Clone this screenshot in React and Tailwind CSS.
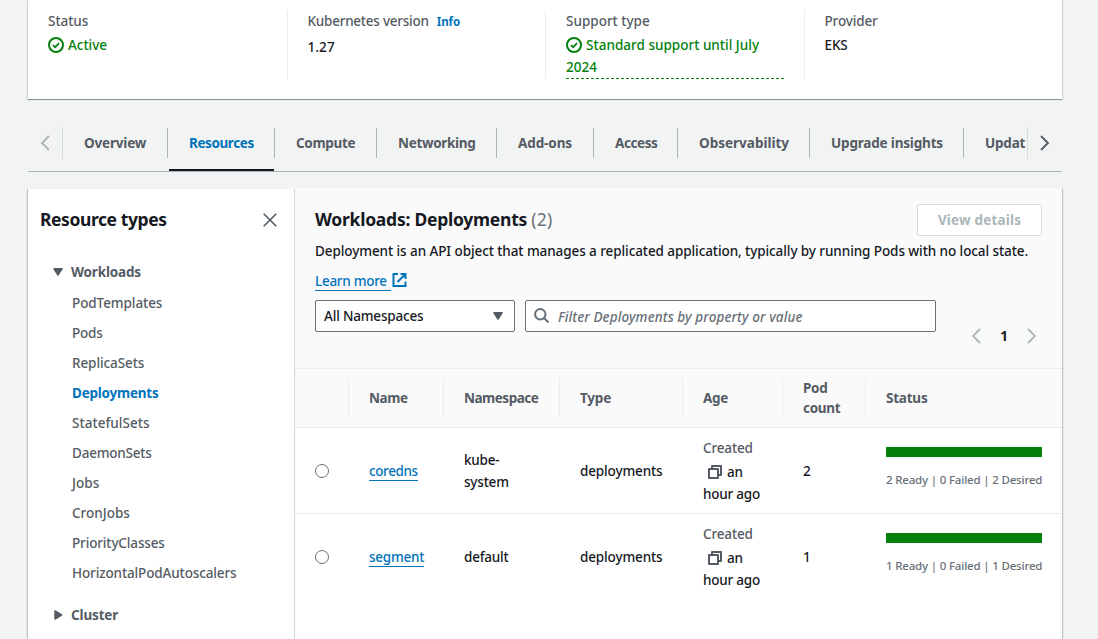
import React from "react";

const CheckCircle = () => (
  <svg className="mr-[0.6px] inline-block size-4 align-[-3px]" viewBox="0 0 16 16" fill="none" stroke="currentColor" strokeWidth="2">
    <circle cx="8" cy="8" r="7" />
    <path d="m4.8 8 2.3 2.2 4-4" strokeWidth="1.7" />
  </svg>
);

const Chevron = ({ left, className = "" }) => (
  <svg className={`h-4 w-4 shrink-0 ${className}`} viewBox="0 0 16 16" fill="none" stroke="currentColor" strokeWidth="1.8">
    <path d={left ? "M12 1 5 8l7 7" : "m4 1 7 7-7 7"} />
  </svg>
);

const Caret = ({ right, className = "" }) => (
  <svg className={`shrink-0 ${className}`} width="16" height="16" viewBox="0 0 16 16" fill="currentColor" stroke="currentColor" strokeLinejoin="round">
    <path d={right ? "M5 4v8l6.5-4z" : "M4 4.8h8l-4 6.2z"} strokeWidth="1.5" />
  </svg>
);

const CopyIcon = () => (
  <svg className="mr-[5px] ml-[5px] inline-block h-[14px] w-[14px] align-[-2px] text-[#545b64]" viewBox="0 0 14 14" fill="none" stroke="currentColor" strokeWidth="2" strokeLinejoin="round">
    <path d="M1 4h9v9H1z" />
    <path d="M4 4V1h9v9h-3" />
  </svg>
);

const tabs = [
  ["Overview", "w-[105px] pl-[21px] tracking-[-0.18px]"],
  ["Resources", "w-[107px] pl-[21px] tracking-[-0.41px] text-[#0073bb]"],
  ["Compute", "w-[102px] pl-[21px] tracking-[-0.33px]"],
  ["Networking", "w-[120px] pl-[21px] tracking-[-0.31px]"],
  ["Add-ons", "w-[97px] pl-[21px] tracking-[-0.1px]"],
  ["Access", "w-[84px] pl-[21px] tracking-[-0.4px]"],
  ["Observability", "w-[132px] pl-[21px] tracking-[0px]"],
  ["Upgrade insights", "w-[154px] pl-[21px] tracking-[-0.18px]"],
  ["Updat", "w-[63px] pl-[21px] tracking-[-0.2px]"],
];

const types = [
  ["PodTemplates", "tracking-[-0.08px]"],
  ["Pods", "tracking-[-0.2px]"],
  ["ReplicaSets", "tracking-[-0.08px]"],
  ["Deployments", "tracking-[-0.23px] font-bold text-[#0073bb]"],
  ["StatefulSets", "tracking-[0.04px]"],
  ["DaemonSets", "tracking-[-0.22px]"],
  ["Jobs", "tracking-[0.1px]"],
  ["CronJobs", "tracking-[0px]"],
  ["PriorityClasses", "tracking-[-0.14px]"],
  ["HorizontalPodAutoscalers", "tracking-[-0.13px]"],
];

const columns = "grid grid-cols-[53px_95px_116px_123px_100px_83px_197px]";

const headers = [
  ["Name", "tracking-[-0.4px]"],
  ["Namespace", "tracking-[-0.48px]"],
  ["Type", "tracking-[-0.2px]"],
  ["Age", "tracking-[-0.35px]"],
  ["Pod count", "tracking-[-0.28px]"],
  ["Status", "tracking-[-0.22px]"],
];

const rows = [
  { name: "coredns", nameCls: "tracking-[-0.38px]", ns: "kube-system", count: 2, border: "shadow-[inset_0_-1px_0_0_#eaeded]" },
  { name: "segment", nameCls: "tracking-[-0.25px]", ns: "default", count: 1, border: "" },
];

function Overview() {
  return (
    <section className="grid h-[99px] shrink-0 grid-cols-4 bg-white pt-[10px] shadow-[0_1px_0_0_#879596,1px_1px_1px_0_rgba(0,28,36,0.15),-1px_1px_1px_0_rgba(0,28,36,0.15)]">
      <div className="h-[69px] pl-5">
        <div className="leading-[22px] tracking-[-0.05px] text-[#545b64]">Status</div>
        <div className="mt-[2px] leading-[22px] tracking-[-0.05px] text-[#037f0c]"><CheckCircle /> Active</div>
      </div>
      <div className="h-[69px] border-l border-[#eaeded] pl-5">
        <div className="leading-[22px] tracking-[-0.24px] text-[#545b64]">
          Kubernetes version<span className="ml-2 text-[11.5px] font-bold tracking-[-0.05px] text-[#0073bb]">Info</span>
        </div>
        <div className="mt-[3px] leading-[22px] tracking-[0.1px]">1.27</div>
      </div>
      <div className="h-[69px] border-l border-[#eaeded] pr-5 pl-5">
        <div className="leading-[22px] tracking-[0px] text-[#545b64]">Support type</div>
        <div className="mt-[2px] border-b border-dashed border-[#037f0c] leading-[22px] tracking-[0.01px] text-[#037f0c]">
          <CheckCircle /> Standard support until July<br />2024
        </div>
      </div>
      <div className="h-[69px] border-l border-[#eaeded] pl-5">
        <div className="leading-[22px] tracking-[-0.15px] text-[#545b64]">Provider</div>
        <div className="mt-[2px] leading-[22px] tracking-[-0.1px]">EKS</div>
      </div>
    </section>
  );
}

function Tabs() {
  return (
    <nav className="mt-[17px] flex h-[56px] shrink-0 border-b border-[#aab7b8] pt-[11px] text-[#545b64]">
      <div className="flex h-8 w-[35px] items-center border-r border-[#d5dbdb] pl-[9px]">
        <Chevron left className="text-[#aab7b8]" />
      </div>
      <div className="flex h-[44px] w-[964px]">
        {tabs.map(([label, cls], i) => (
          <div key={label} className={`relative flex h-[44px] shrink-0 flex-col pt-px font-bold ${cls}`}>
            <span className="leading-[30px]">{label}</span>
            {i < 8 && <span className="absolute top-px right-0 h-[30px] w-px bg-[#aab7b8]" />}
            {i === 1 && <span className="absolute bottom-0 left-px h-[2px] w-[105px] bg-[#16191f]" />}
          </div>
        ))}
      </div>
      <div className="flex h-8 w-[35px] items-center border-l border-[#d5dbdb] bg-[#f2f3f3] pl-[9px]">
        <Chevron className="text-[#545b64]" />
      </div>
    </nav>
  );
}

function Sidebar() {
  return (
    <aside className="mt-px w-[267px] shrink-0 border-r border-[#d0d7d7] bg-white text-[#545b64]">
      <div className="flex h-[60px] items-center justify-between pr-4 pl-3">
        <h2 className="text-[17.5px] font-bold tracking-[-0.42px] text-[#16191f]">Resource types</h2>
        <svg className="mt-[2px] size-4" viewBox="0 0 16 16" fill="none" stroke="currentColor" strokeWidth="1.6">
          <path d="m1.7 1.7 12.6 12.6M14.3 1.7 1.7 14.3" />
        </svg>
      </div>
      <div className="mt-[12px] flex h-[22px] items-center pl-[22px] font-bold tracking-[-0.18px]">
        <Caret className="mr-[5px]" />Workloads
      </div>
      <ul className="pt-1 pl-[44px]">
        {types.map(([label, cls]) => (
          <li key={label} className={`h-[30px] leading-[32px] ${cls}`}>{label}</li>
        ))}
      </ul>
      <div className="mt-[17px] flex h-[22px] items-center pl-[22px] font-bold tracking-[-0.15px]">
        <Caret right className="mr-[5px]" />Cluster
      </div>
    </aside>
  );
}

function Header() {
  return (
    <div className="h-[180px] bg-[#fafafa] px-5 pt-4">
      <div className="flex h-8 items-center justify-between">
        <h2 className="pb-[2px] text-[17.5px] font-bold tracking-[-0.25px]">
          Workloads: Deployments <span className="font-normal tracking-[0.2px] text-[#687078]">(2)</span>
        </h2>
        <button className="h-8 w-[125px] rounded-[2px] border border-[#d5dbdb] bg-white font-bold tracking-[0.18px] text-[#aab7b8]">View details</button>
      </div>
      <p className="mt-[4px] leading-[22px] tracking-[-0.081px] whitespace-nowrap">
        Deployment is an API object that manages a replicated application, typically by running Pods with no local state.
      </p>
      <div className="mt-[8px] flex h-[21px] items-start">
        <a className="h-[21px] border-b border-[#0073bb] pr-[4px] leading-[22px] tracking-[-0.28px] text-[#0073bb]">Learn more</a>
        <svg className="mt-[2px] ml-px h-[15px] w-[15px] text-[#0073bb]" viewBox="0 0 15 15" fill="none" stroke="currentColor" strokeWidth="2">
          <path d="M6 2H1.5v12h12V9.5M8.5 2h5v5M13.5 2 5.5 10" />
        </svg>
      </div>
      <div className="mt-[9px] flex">
        <div className="flex h-8 w-[200px] items-center justify-between rounded-[2px] border border-[#687078] bg-white pr-2 pl-2 tracking-[-0.18px]">
          All Namespaces<Caret className="text-[#545b64]" />
        </div>
        <div className="ml-[10px] flex h-8 w-[411px] items-center rounded-[2px] border border-[#687078] bg-white pl-2 text-[#687078]">
          <svg className="mr-2 size-4" viewBox="0 0 16 16" fill="none" stroke="currentColor" strokeWidth="2">
            <circle cx="6.3" cy="6.3" r="5.2" />
            <path d="m10 10 4.5 4.5" />
          </svg>
          <span className="pt-[3px] tracking-[0.11px] italic">Filter Deployments by property or value</span>
        </div>
        <div className="mt-[28px] ml-[32px] flex h-4 items-center text-[#aab7b8]">
          <Chevron left />
          <span className="w-[40px] text-center font-bold text-[#16191f]">1</span>
          <Chevron />
        </div>
      </div>
    </div>
  );
}

function Table() {
  return (
    <div>
      <div className={`${columns} h-[60px] border-t border-b border-[#eaeded] bg-[#fafafa] py-[9px] text-[#545b64]`}>
        <div />
        {headers.map(([label, cls]) => (
          <div key={label} className={`flex items-center border-l border-[#eaeded] pr-5 pl-5 leading-5 font-bold ${cls}`}>{label}</div>
        ))}
      </div>
      {rows.map((r) => (
        <div key={r.name} className={`${columns} h-[86px] items-center bg-white ${r.border}`}>
          <div className="pl-5"><div className="size-[14px] rounded-full border border-[#687078]" /></div>
          <div className="pl-[21px]"><a className={`inline-block h-[20px] border-b border-[#0073bb] leading-[20px] text-[#0073bb] ${r.nameCls}`}>{r.name}</a></div>
          <div className="pr-10 pl-[21px] leading-[22px] tracking-[-0.2px]">{r.ns}</div>
          <div className="pl-[21px] leading-[22px] tracking-[-0.14px]">deployments</div>
          <div className="pl-[21px] leading-[22px] tracking-[-0.22px]">
            <div className="mb-[2px] tracking-[-0.15px] text-[#545b64]">Created</div>
            <CopyIcon />an<br />hour ago
          </div>
          <div className="pl-[21px]">{r.count}</div>
          <div className="h-[46px] pt-[2px] pl-[21px]">
            <div className="-mt-[3px] h-[10px] w-[156px] bg-[#037f0c]" />
            <div className="mt-[13px] text-[11.5px] leading-5 tracking-[-0.18px] whitespace-nowrap text-[#687078]">
              {r.count} Ready | 0 Failed | {r.count} Desired
            </div>
          </div>
        </div>
      ))}
    </div>
  );
}

export default function App() {
  return (
    <div className="flex h-[639px] w-[1098px] flex-col overflow-hidden bg-[#f2f3f3] pr-9 pl-7 font-['Noto_Sans','Open_Sans',sans-serif] text-[13.5px] font-medium text-[#16191f]">
      <Overview />
      <Tabs />
      <div className="mt-[16px] flex min-h-0 flex-1 shadow-[1px_1px_1px_0_rgba(0,28,36,0.22),-1px_1px_1px_0_rgba(0,28,36,0.22)]">
        <Sidebar />
        <main className="min-w-0 flex-1 bg-white">
          <Header />
          <Table />
        </main>
      </div>
    </div>
  );
}
